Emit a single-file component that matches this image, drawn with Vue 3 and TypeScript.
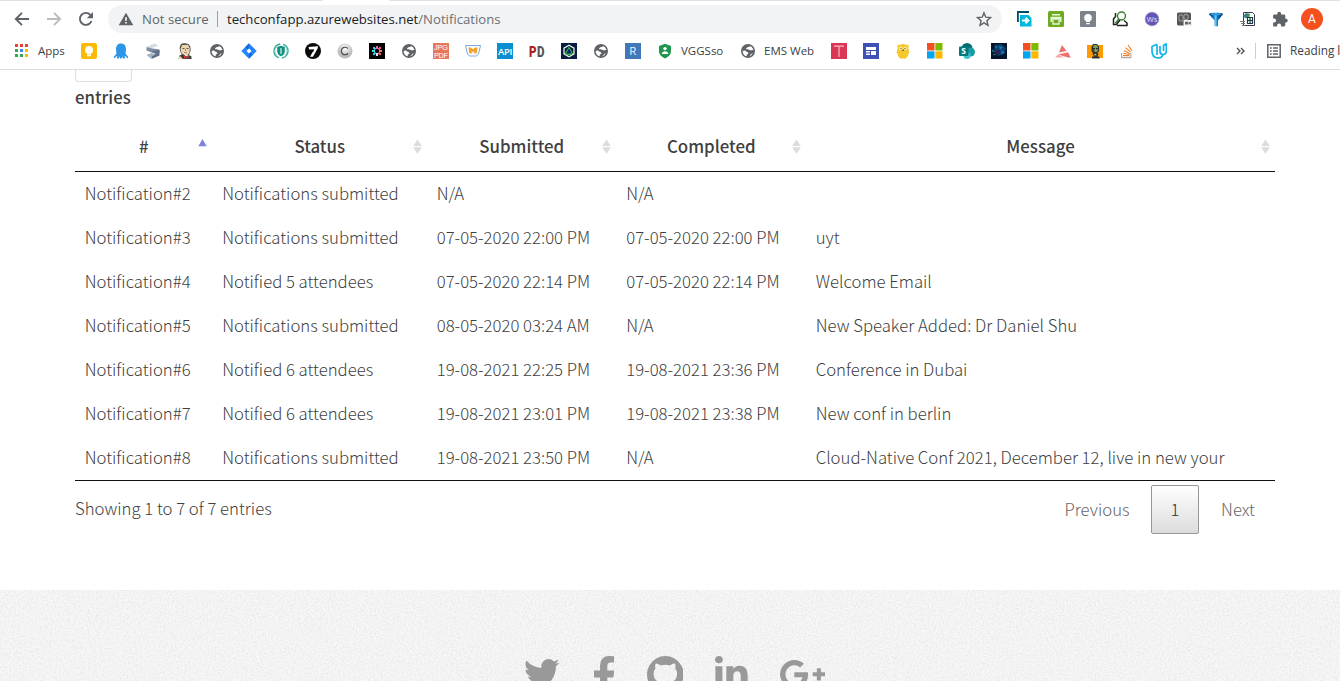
<script setup lang="ts">
interface Bookmark {
  icon: string
  label?: string
  size?: string
}

interface Row {
  id: string
  status: string
  submitted: string
  completed: string
  message: string
}

const globe =
  '<circle cx="8" cy="8" r="7" fill="#5f6368"/><path d="M2.6 8.2C4 7.2 5.600 7.600 6.300 8.600C7.200 9.600 8.600 9 8.400 10.200C8.200 11.200 7 11 6.800 12.200L6.600 13.300C4.200 12.800 2.700 10.700 2.600 8.200ZM6.200 5.300C7.200 3.600 9 4.300 10.300 3.200C11.800 3.800 13 5.300 13.400 7C12 6.600 11.700 7.500 10.400 7.300C9 7 8.600 6 7.500 6.300C6.600 6.500 5.800 6.200 6.200 5.300ZM9.200 13.200C11 12.200 10.400 10.700 12.700 10.200C12 11.800 10.800 12.900 9.200 13.200Z" fill="#fff"/>'

const microsoft =
  '<path fill="#f25022" d="M0 0h7.500v7.500H0z"/><path fill="#7fba00" d="M8.300 0h7.200v7.500H8.300z"/><path fill="#00a4ef" d="M0 8.300h7.500v7.200H0z"/><path fill="#ffb900" d="M8.300 8.300h7.200v7.200H8.300z"/>'

const bookmarks: Bookmark[] = [
  {
    label: 'Apps',
    size: 'apps',
    icon: '<path fill="#ea4335" d="M1 1h3v3H1zM6 1h3v3H6zM11 1h3v3h-3z"/><path fill="#34a853" d="M1 6h3v3H1zM1 11h3v3H1zM6 11h3v3H6z"/><path fill="#4285f4" d="M6 6h3v3H6z"/><path fill="#fbbc05" d="M11 6h3v3h-3zM11 11h3v3h-3z"/>',
  },
  {
    icon: '<rect width="16" height="16" rx="2" fill="#fbba05"/><circle cx="8" cy="7" r="4" fill="#fff"/><path fill="#fff" d="M6 9.500h4v2H6zM6 12h4v1.200H6z"/>',
  },
  {
    icon: '<path fill="#2d95e5" d="M3 6.500C3 2.500 5 .6 8 .6s5 2 5 6c0 2-.6 2.800-.4 4 .3 1.500 2.400 1.800 2.600 4.300l-1.500.1c-.4-1.800-1.400-2-2-1.600l.2 2.200h-2l-.7-2.400-.5 2.400h-1.600l-.5-2.400-.7 2.400H4l.2-2.200c-.8-.4-1.500 0-1.900 1.600L.8 14.900C1 12.300 3.100 12 3.400 10.600 3.600 9.400 3 8.500 3 6.500z"/>',
  },
  {
    icon: '<path fill="#d5dbe2" d="M1.500 4L9.500.5l4 2L6 5.500z"/><path fill="#7e8da1" d="M1.500 4v3.500L10.500 11l4-1.500v-3L6 5.300z"/><path fill="#5d6f88" d="M14.500 7v5.500L6.500 16v-3l5-2.500-5-2z"/><path fill="#a4b0bf" d="M1.500 12l5-2 4 1.500-4 2v2.500z"/>',
  },
  {
    icon: '<path fill="#4b4743" d="M3 8C2 2 4 .3 8 .3S14 3 13.500 8L12 12H5z"/><path fill="#eed5ad" d="M3.500 6l1.500-4 6-.3 1.800 3.800-.4 4.500L9.500 13 6 12 4 9z"/><path fill="#555" d="M5.500 5h2v1h-2zM9.500 5h2v1h-2z"/><path stroke="#a88c72" fill="none" d="M7 9.500h3M8.500 6v2"/><path fill="#394044" d="M1.500 16l1-3.500L6 11l3 2.500 3-1.500 2.500 1.500V16z"/><path fill="#d33833" d="M7 12.500l2 1 2.500-1v3L9 14.700 7 16z"/><path fill="#eed5ad" d="M1 15l2-2 3 3H1z"/>',
  },
  { icon: globe },
  {
    icon: '<path fill="#2684ff" d="M8 .3L15.700 8 8 15.700.3 8z"/><path fill="#0052cc" d="M8 .3L4.300 4 8 7.700zM8 15.700L11.700 12 8 8.300z" opacity=".55"/><path fill="#fff" d="M8 5.500L10.500 8 8 10.500 5.500 8z"/>',
  },
  {
    icon: '<circle cx="8" cy="8" r="7" fill="none" stroke="#35ac9c" stroke-width="1.400" stroke-dasharray="19 2.990" stroke-dashoffset="-13"/><path fill="none" stroke="#8fd3c9" d="M4 3.500a6 6 0 0 0 0 9M12 3.500a6 6 0 0 1 0 9"/><path fill="#138f80" d="M8 2.800l3.800 1.300v4.400c0 2.400-1.700 3.800-3.800 4.700-2.100-.9-3.800-2.300-3.800-4.700V4.100z"/><path stroke="#d7f0eb" d="M8 5v6" stroke-width="1.200"/>',
  },
  {
    icon: '<circle cx="8" cy="8" r="8" fill="#0a0a0a"/><path fill="#fff" d="M3.500 4l9.500-.7-.4 2.200L8 13.800H5l4.200-7.600-5 .3z"/><path stroke="#0a0a0a" d="M4 8.800l5-1"/>',
  },
  {
    icon: '<defs><radialGradient id="silver" cy=".3"><stop stop-color="#fff"/><stop offset="1" stop-color="#bcbcbc"/></radialGradient></defs><circle cx="8" cy="8" r="7.500" fill="url(#silver)"/><path fill="none" stroke="#444" stroke-width="1.100" d="M11 5.600A3.800 3.800 0 1 0 11 10.400"/>',
  },
  {
    icon: '<path d="M0 0h16v16H0z"/><g stroke-width="2"><path stroke="#ff5fa0" d="M8 3v3M11.700 4.300L9.500 6.500"/><path stroke="#ff6a6a" d="M13 8h-3M11.700 11.700L9.500 9.500"/><path stroke="#35dbe8" d="M3 8h3M4.300 11.700l2.200-2.200M4.300 4.300l2.200 2.200"/><path stroke="#e6d8ff" d="M8 13v-3"/></g>',
  },
  { icon: globe },
  {
    icon: '<path fill="#e5775d" d="M0 0h16v16H0z"/><g fill="#fff" font-family="Liberation Sans" font-size="7.300"><text x="1" y="7" textLength="14">JPG</text><text x="1" y="15" textLength="14">PDF</text></g>',
  },
  {
    icon: '<path fill="#fff" stroke="#7aa8da" d="M.5 2.500h15l-2 8.500-2 2h-7l-2-2z"/><path fill="#f4a024" d="M3.500 4.500h2.300L8 6.300l2.200-1.800h2.300l-.8 6H9.200V8.300L8 9.300l-1.200-1v2.200H4.300z"/>',
  },
  {
    icon: '<path fill="#0b8fd3" d="M0 0h16v16H0z"/><text x="1" y="12" fill="#fff" font-family="Open Sans" font-size="9.500" font-weight="600" textLength="14.500">API</text>',
  },
  {
    icon: '<g font-family="Roboto" font-weight="900" font-size="15.500"><text x="0" y="13.500" fill="#a81d20" textLength="7.500" lengthAdjust="spacingAndGlyphs">P</text><text x="8" y="13.500" fill="#555" textLength="7.500" lengthAdjust="spacingAndGlyphs">D</text></g>',
  },
  {
    icon: '<path fill="#081c40" d="M0 0h16v16H0z"/><path fill="none" stroke="#e8f0e6" stroke-width="1.300" d="M8 2.200l5 2.900v5.800l-5 2.900-5-2.900V5.100z"/><path fill="#37b34a" d="M8 3.500l4.200 7-2 1.500H5.800l-2-1.500z"/><path fill="#0a1e66" d="M8 5.500l2.800 5H5.200z"/>',
  },
  { icon: globe },
  {
    icon: '<path fill="#4178ba" d="M0 0h16v16H0z"/><text x="4.300" y="12.300" fill="#e8f2ff" font-family="Open Sans" font-size="11.500">R</text>',
  },
  {
    label: 'VGGSso',
    size: 'sso',
    icon: '<path fill="#1e9650" d="M8 .8l6 2.300v5c0 3.600-2.400 6-6 7.300-3.600-1.300-6-3.700-6-7.300v-5z"/><circle cx="8" cy="5.600" r="1.700" fill="#fff"/><path fill="#fff" d="M4.800 10.900c0-3.600 6.400-3.600 6.400 0z"/>',
  },
  { label: 'EMS Web', size: 'ems', icon: globe },
  {
    icon: '<path fill="#dc3655" d="M0 0h16v16H0z"/><path fill="none" stroke="#f9bcc8" stroke-width="1.200" d="M3 3.200h10M8 3.200V14"/>',
  },
  {
    icon: '<path fill="#3f51b5" d="M0 0h16v16H0z"/><path fill="#fff" d="M3 4h10v3H3zM3 8h4v1.500H3zM3 10.500h4V12H3zM8 8h5v4H8z"/>',
  },
  {
    icon: '<path fill="#f5c92d" d="M2.500 1.500l2 .5C6.500.5 9.500.5 11.500 2l2-.5v3c-.4 1 .3 2 .5 3.500l.5 2-1 .5c-.2 2-1 3.500-2.500 4.500l-1 1-1-.6H7L6 16l-1-1c-1.500-1-2.300-2.500-2.500-4.500l-1-.5.5-2c.2-1.500.9-2.500.5-3.500z"/><g fill="#fbeeb8"><circle cx="5.700" cy="5.300" r="1.600"/><circle cx="10.300" cy="5.300" r="1.600"/></g><path fill="#65511e" d="M5.500 5h1v1h-1zM9.500 5h1v1h-1zM7 6.800h2v1H7z"/>',
  },
  { icon: microsoft },
  {
    icon: '<circle cx="8" cy="5.500" r="5.500" fill="#036c70"/><circle cx="11.500" cy="9" r="4.500" fill="#1a9ba1"/><circle cx="8" cy="12.500" r="3.500" fill="#37c6d0"/><rect y="3.500" width="9.500" height="9.500" rx="1" fill="#03787c"/><text x="2.300" y="11" fill="#fff" font-family="Open Sans" font-weight="700" font-size="8.500">S</text>',
  },
  {
    icon: '<path fill="#07152b" d="M0 0h16v16H0z"/><path fill="#0d3f70" d="M4 2l6-1 5 4-2 6-6 2-4-5z"/><path fill="#1875b5" d="M8 3l4 1-3 3zM11 7l3 3-4 1z"/><path stroke="#0b7f8a" stroke-width="1.300" d="M1 7l2 2M2 12l3-1M4 3l2 2"/><path fill="#33205b" d="M5 7h4v4H5z"/>',
  },
  { icon: microsoft },
  {
    icon: '<path fill="#f0706d" d="M7 2l4.500 6L4 9.500zM3 11.500l10-2.200 2.700 5.200H13z"/><path fill="#f7aaa5" d="M3 11.500l6 3H0z"/>',
  },
  {
    icon: '<path fill="#ff9b00" d="M0 2h16v13H0z"/><path fill="#333" d="M6 1h4l2 2.500V8l-1.500 2 1 1-1 2 2 1v1.500H5V14l2-1-1.500-2L6 10 4.500 8V4z"/><path fill="#77a35b" d="M6.500 2H10l1 2.500v3l-2 2-2-1.500-1-3.500z"/><path fill="#222" d="M6 5h2v1.300H6zM9 5h1.800v1.300H9z"/><path fill="#c8c8aa" d="M7.300 11h2v1.300h-2z"/>',
  },
  {
    icon: '<path fill="none" stroke="#aaa" stroke-width="1.100" d="M2.600 10v4.600h9.300V10"/><g stroke="#f48024" stroke-width="1.100"><path d="M4 12.600h6.500M4.200 10.200l6.300 1.300M4.900 7.600l6 2.800M6.500 4.800l5.100 4.100M9 2l3.800 5.600"/></g>',
  },
  {
    icon: '<path fill="none" stroke="#13b5ea" stroke-width="1.700" stroke-linejoin="round" d="M6 1.300L1 3.600V8c0 4.200 2 6.600 5.500 7 3.300 0 5-1.500 5.700-3.600M6 1.300V12M9 3v5c0 2.500 1.200 3.600 2.800 3.600 2.200 0 3.600-1.600 3.600-4.400V.9L12.500 2.200V8"/>',
  },
]

const extensions: string[] = [
  '<path fill="none" stroke="#004b68" stroke-width="1.800" d="M1.900 11V1H13"/><path fill="#00b8de" d="M4 4h8.500L15.500 7v8.500H4z"/><path fill="none" stroke="#fff" stroke-width="2" d="M6 9.500h6M9.500 6.800l2.800 2.700-2.800 2.700"/>',
  '<rect width="16" height="16" rx="1.500" fill="#6eaa22"/><path fill="#e8f7d4" d="M4 3h8v1.500H4zM2.500 5.700h11V11H12V8.800H4V11H2.500z"/><path fill="none" stroke="#e8f7d4" stroke-width="1.300" d="M5 9v4h6V9"/>',
  '<rect width="16" height="16" rx="1" fill="#7c838a"/><circle cx="8" cy="6.700" r="3.800" fill="#fff"/><path fill="#fff" d="M6 9h4v2H6zM6.200 12h3.600v1.300H6.200z"/>',
  '<path fill="none" stroke="#222" stroke-width="1.500" d="M3.500 2v3.500L1.500 8v5.500h3L8 9M5 14.500h10v-2.500L12 9.500"/><circle cx="9.500" cy="5" r="4" fill="#f7fff4" stroke="#3b793a" stroke-width="1.400"/><path stroke="#3b793a" stroke-width="2" d="M7 8L3.500 12.500"/>',
  '<circle cx="8" cy="8" r="6.800" fill="#6256b2" stroke="#8d85cb" stroke-dasharray="1.500 1"/><text x="2.800" y="10.500" fill="#e6e2ff" font-family="Open Sans" font-size="7.500">Ws</text>',
  '<rect x="1" y="1.500" width="14" height="13" rx="1.500" fill="#555"/><ellipse cx="5" cy="7" rx="2.200" ry="3.300" fill="none" stroke="#999" stroke-width="1.100"/><ellipse cx="10" cy="6" rx="2.200" ry="2.600" fill="none" stroke="#999" stroke-width="1.100"/><rect x="7.500" y="9" width="8.500" height="6" rx="1" fill="#f2f2f2"/><path fill="#666" d="M9 10.800h3.500v2.700H9zM13 11.500l1.800-1v3.300l-1.800-1z"/>',
  '<defs><linearGradient id="funnel"><stop stop-color="#052c50"/><stop offset=".3" stop-color="#0a6bc0"/><stop offset=".48" stop-color="#62ceff"/><stop offset=".62" stop-color="#0a6bc0"/><stop offset="1" stop-color="#042b52"/></linearGradient></defs><path fill="url(#funnel)" d="M1 3.200C1 1.300 15 1.300 15 3.200L10 9.500v5.800H6.500V9.500z"/><ellipse cx="8" cy="3.200" rx="5.500" ry="1.100" fill="#2f9bdc"/>',
  '<path fill="#fff" stroke="#3b3b54" d="M3.500 1.500h9l2 2v11h-11z"/><path fill="#3e75b2" d="M3 5l3-3 4 1-1 4H5z"/><path fill="#33924d" d="M6 3h3v3H6z"/><path fill="#fff" stroke="#173e3c" stroke-width="1.200" d="M7.500 6.500h5v6h-5zM10 6.500v6M7.500 9.500h5"/><path stroke="#777" d="M0 10.500h5M1 12.500h4M2 14.500h3"/>',
  '<path fill="#5f6368" d="M14.300 7.700h-1V4.900c0-.8-.6-1.400-1.400-1.400H9.100V2.700a1.900 1.900 0 0 0-3.800 0v.8H2.500c-.8 0-1.400.6-1.400 1.400v2.600h1a2 2 0 0 1 0 4h-1v2.700c0 .7.6 1.300 1.400 1.300h2.600v-1a2 2 0 0 1 4 0v1h2.800c.8 0 1.400-.6 1.400-1.400v-2.700h1a1.900 1.900 0 0 0 0-3.700z"/>',
]

const columns = ['#', 'Status', 'Submitted', 'Completed', 'Message']

const rows: Row[] = [
  { id: 'Notification#2', status: 'Notifications submitted', submitted: 'N/A', completed: 'N/A', message: '' },
  { id: 'Notification#3', status: 'Notifications submitted', submitted: '07-05-2020 22:00 PM', completed: '07-05-2020 22:00 PM', message: 'uyt' },
  { id: 'Notification#4', status: 'Notified 5 attendees', submitted: '07-05-2020 22:14 PM', completed: '07-05-2020 22:14 PM', message: 'Welcome Email' },
  { id: 'Notification#5', status: 'Notifications submitted', submitted: '08-05-2020 03:24 AM', completed: 'N/A', message: 'New Speaker Added: Dr Daniel Shu' },
  { id: 'Notification#6', status: 'Notified 6 attendees', submitted: '19-08-2021 22:25 PM', completed: '19-08-2021 23:36 PM', message: 'Conference in Dubai' },
  { id: 'Notification#7', status: 'Notified 6 attendees', submitted: '19-08-2021 23:01 PM', completed: '19-08-2021 23:38 PM', message: 'New conf in berlin' },
  { id: 'Notification#8', status: 'Notifications submitted', submitted: '19-08-2021 23:50 PM', completed: 'N/A', message: 'Cloud-Native Conf 2021, December 12, live in new your' },
]
</script>

<template>
  <div class="window">
    <header class="chrome">
      <div class="tab-edge"><span class="edge-left"></span><span class="edge-right"></span></div>
      <div class="toolbar">
        <svg class="nav" viewBox="0 0 16 16"><path d="M15 8H2.500M8 1.800L1.800 8 8 14.200" fill="none" stroke="#5f6368" stroke-width="1.900" /></svg>
        <svg class="nav" viewBox="0 0 16 16"><path d="M1 8h12.500M8 1.800L14.200 8 8 14.200" fill="none" stroke="#babcbe" stroke-width="1.900" /></svg>
        <svg class="nav" viewBox="0 0 16 16"><path d="M13.500 10A6 6 0 1 1 12.300 3.800L14 5.500" fill="none" stroke="#5f6368" stroke-width="1.900" /><path d="M15 1v6.200H8.800z" fill="#5f6368" /></svg>
        <div class="address">
          <svg class="warn" viewBox="0 0 16 14"><path d="M8 .8L15.300 13.300H.7z" fill="#5f6368" /><path d="M7.200 5.200h1.600v3.600H7.200zM7.200 10h1.600v1.600H7.200z" fill="#fff" /></svg>
          <span class="insecure">Not secure</span>
          <span class="divider"></span>
          <span class="url">techconfapp.azurewebsites.net<span class="path">/Notifications</span></span>
          <svg class="star" viewBox="0 0 16 16"><path d="M8 1.900l1.800 4.300 4.700.4-3.600 3.100 1.100 4.600L8 11.800l-4 2.500 1.100-4.600L1.500 6.600l4.700-.4z" fill="none" stroke="#5f6368" stroke-width="1.400" /></svg>
        </div>
        <div class="extensions">
          <svg v-for="(markup, i) in extensions" :key="i" viewBox="0 0 16 16" v-html="markup"></svg>
        </div>
        <span class="avatar">A</span>
      </div>
      <nav class="bookmarks">
        <a v-for="(mark, i) in bookmarks" :key="i" class="bookmark" :class="mark.size">
          <svg viewBox="0 0 16 16" v-html="mark.icon"></svg>
          <span v-if="mark.label" class="label">{{ mark.label }}</span>
        </a>
        <div class="overflow">
          <svg class="more" viewBox="0 0 9 8"><path d="M1 1l3 3-3 3M5 1l3 3-3 3" fill="none" stroke="#4d5156" stroke-width="1.400" /></svg>
          <span class="separator"></span>
          <svg class="list" viewBox="0 0 14 14"><path d="M.8.800h12.400v12.400H.8z" fill="none" stroke="#5f6368" stroke-width="1.500" /><path d="M3 3.300h1.700v1.500H3zM6 3.300h5v1.500H6zM3 6.300h1.700v1.500H3zM6 6.300h5v1.500H6zM3 9.300h1.700v1.500H3zM6 9.300h5v1.500H6z" fill="#5f6368" /></svg>
          <span class="reading label">Reading list</span>
        </div>
      </nav>
    </header>

    <main class="page">
      <div class="length-select"></div>
      <div class="entries">entries</div>
      <table class="grid">
        <colgroup>
          <col class="c-id" /><col class="c-status" /><col class="c-date" /><col class="c-date" /><col />
        </colgroup>
        <thead>
          <tr>
            <th v-for="(name, i) in columns" :key="name">
              {{ name }}
              <svg class="sort" viewBox="0 0 9 16">
                <path v-if="i === 0" d="M4.500 0L8.700 7.200H.3z" fill="#8080e0" />
                <path v-else d="M4.500.500L8.800 7H.2zM.2 8.300h8.600L4.500 15z" fill="#dcdcdc" />
              </svg>
            </th>
          </tr>
        </thead>
        <tbody>
          <tr v-for="row in rows" :key="row.id">
            <td>{{ row.id }}</td>
            <td>{{ row.status }}</td>
            <td>{{ row.submitted }}</td>
            <td>{{ row.completed }}</td>
            <td>{{ row.message }}</td>
          </tr>
        </tbody>
      </table>
      <div class="summary">
        <span class="info">Showing 1 to 7 of 7 entries</span>
        <div class="pager">
          <a class="step previous">Previous</a>
          <a class="current">1</a>
          <a class="step">Next</a>
        </div>
      </div>
    </main>

    <footer class="footer">
      <svg class="grain" width="1340" height="91">
        <filter id="grain" x="0" y="0" width="100%" height="100%">
          <feTurbulence type="fractalNoise" baseFrequency="0.6" numOctaves="2" seed="4" />
          <feColorMatrix values="0 0 0 0 0  0 0 0 0 0  0 0 0 0 0  0.13 0 0 0 -0.048" />
        </filter>
        <rect width="1340" height="91" filter="url(#grain)" />
      </svg>
      <div class="social">
        <svg class="twitter" viewBox="108 256 1576 1280"><path d="M1684 408q-67 98-162 167 1 14 1 42 0 130-38 259.500t-115.500 248.500-184.500 210.500-258 146-323 54.500q-271 0-496-145 35 4 78 4 225 0 401-138-105-2-188-64.500t-114-159.500q33 5 61 5 43 0 85-11-112-23-185.500-111.500t-73.500-205.500v-4q68 38 146 41-66-44-105-115t-39-154q0-88 44-163 121 149 294.500 238.500t371.500 99.500q-8-38-8-74 0-134 94.500-228.500t228.500-94.500q140 0 236 102 109-21 205-78-37 115-142 178 93-10 186-50z" /></svg>
        <svg class="facebook" viewBox="479 0 864 1664"><path d="M1343 12v264h-157q-86 0-116 36t-30 108v189h293l-39 296h-254v759h-306v-759h-255v-296h255v-218q0-186 104-288.500t277-102.500q147 0 228 12z" /></svg>
        <svg class="github" viewBox="128 128 1536 1536"><path d="M896 128q209 0 385.500 103t279.500 279.500 103 385.500q0 251-146.500 451.500t-378.500 277.500q-27 5-40-7t-13-30q0-3 .5-76.500t.5-134.500q0-97-52-142 57-6 102.500-18t94-39 81-66.500 53-105 20.500-150.500q0-119-79-206 37-91-8-204-28-9-81 11t-92 44l-38 24q-93-26-192-26t-192 26q-16-11-42.500-27t-83.500-38.500-85-13.500q-45 113-8 204-79 87-79 206 0 85 20.500 150t52.500 105 80.500 67 94 39 102.500 18q-39 36-49 103-21 10-45 15t-57 5-65.500-21.500-55.500-62.500q-19-32-48.500-52t-49.500-24l-20-3q-21 0-29 4.500t-5 11.500 9 14 13 12l7 5q22 10 43.500 38t31.500 51l10 23q13 38 44 61.500t67 30 69.500 7 55.500-3.500l23-4q0 38 .5 88.500t.5 54.500q0 18-13 30t-40 7q-232-77-378.500-277.500t-146.500-451.500q0-209 103-385.500t279.500-279.500 385.500-103z" /></svg>
        <svg class="linkedin" viewBox="128 148 1536 1468"><path d="M477 625v991h-330v-991h330zm21-306q1 73-50.500 122t-135.500 49h-2q-82 0-132-49t-50-122q0-74 51.500-122.500t134.500-48.500 133 48.500 51 122.500zm1166 729v568h-329v-530q0-105-40.500-164.500t-126.500-59.500q-63 0-105.500 34.500t-63.500 85.500q-11 30-11 81v553h-329q2-399 2-647t-1-296l-1-48h329v144h-2q20-32 41-56t56.500-52 87-43.500 114.500-15.500q171 0 275 113.500t104 332.500z" /></svg>
        <svg class="google" viewBox="0 163 2304 1466"><path d="M1437 913q0 208-87 370.500t-248 254-369 91.500q-149 0-285-58t-234-156-156-234-58-285 58-285 156-234 234-156 285-58q286 0 491 192l-199 191q-117-113-292-113-123 0-227.500 62t-165.500 168.500-61 232.500 61 232.500 165.500 168.500 227.500 62q83 0 152.500-23t114.500-57.500 78.500-78.500 49-83 21.500-74h-416v-252h692q12 63 12 122zm867-122v210h-209v209h-210v-209h-209v-210h209v-209h210v209h209z" /></svg>
      </div>
    </footer>
  </div>
</template>

<style>
html,
body {
  margin: 0;
  overflow: hidden;
  background: #fff;
}
</style>

<style scoped>
.window {
  display: flex;
  flex-direction: column;
  width: 1340px;
  height: 681px;
  overflow: hidden;
  background: #fff;
}

svg {
  display: block;
  flex: none;
}

.chrome {
  box-sizing: border-box;
  height: 70px;
  border-bottom: 1px solid #dadce0;
  font-family: 'Open Sans', sans-serif;
  color: #3c4043;
}

.tab-edge {
  display: flex;
  justify-content: space-between;
  height: 1px;
}

.edge-left {
  width: 323px;
  background: #dee1e6;
}

.edge-right {
  width: 951px;
  background: #dee1e6;
}

.toolbar {
  display: flex;
  align-items: center;
  height: 28px;
  margin-top: 4px;
  padding-left: 14px;
}

.nav {
  width: 16px;
  height: 16px;
  margin-right: 16px;
}

.address {
  display: flex;
  align-items: center;
  box-sizing: border-box;
  width: 894px;
  height: 28px;
  margin-left: -2px;
  padding: 0 10px;
  border-radius: 14px;
  background: #f1f3f4;
  font-size: 13.150px;
  white-space: nowrap;
}

.warn {
  width: 16px;
  height: 14px;
}

.insecure {
  width: 67px;
  margin-left: 8px;
  color: #5f6368;
}

.divider {
  width: 1px;
  height: 16px;
  margin: 0 9px 0 8px;
  background: #9aa0a6;
}

.url {
  color: #202124;
}

.path {
  color: #6c7075;
}

.star {
  width: 16px;
  height: 16px;
  margin-left: auto;
}

.extensions {
  display: flex;
  gap: 16px;
  margin-left: 14px;
}

.extensions svg {
  width: 16px;
  height: 16px;
}

.avatar {
  width: 22px;
  height: 22px;
  margin-left: 13px;
  border-radius: 50%;
  background: #f4511e;
  color: #fff;
  font: 12px/22px Roboto, sans-serif;
  text-align: center;
}

.bookmarks {
  display: flex;
  align-items: center;
  gap: 16px;
  height: 16px;
  margin-top: 10px;
  padding-left: 14px;
  font-size: 11.5px;
  white-space: nowrap;
}

.bookmark {
  display: flex;
  flex: none;
  align-items: center;
  gap: 8px;
  width: 16px;
}

.bookmark svg {
  width: 16px;
  height: 16px;
}

.label {
  padding-bottom: 2px;
}

.bookmark.apps {
  width: 51px;
}

.bookmark.sso {
  width: 67px;
}

.bookmark.ems {
  width: 75px;
}

.overflow {
  display: flex;
  flex: none;
  align-items: center;
  margin-left: 53px;
}

.more {
  width: 9px;
  height: 8px;
}

.separator {
  width: 1px;
  height: 16px;
  margin: 0 11px 0 10px;
  background: #cbcdd1;
}

.list {
  width: 14px;
  height: 14px;
}

.reading {
  margin-left: 9px;
  font-size: 11.800px;
}

.page {
  display: flow-root;
  height: 520px;
  padding: 0 65px 0 75px;
  color: #404040;
  font-family: 'Noto Sans CJK JP', 'Open Sans', sans-serif;
  font-size: 16.730px;
  font-weight: 300;
}

.length-select {
  box-sizing: border-box;
  width: 57px;
  height: 12px;
  border: 1px solid #dedede;
  border-top: 0;
  border-radius: 0 0 4px 4px;
}

.entries {
  height: 32px;
  line-height: 30px;
  font-weight: 500;
}

.grid {
  width: 1200px;
  margin-top: 8px;
  border-bottom: 1px solid #111;
  border-collapse: separate;
  border-spacing: 0;
  table-layout: fixed;
}

.c-id {
  width: 137.500px;
}

.c-status {
  width: 214.500px;
}

.c-date {
  width: 189.500px;
}

.grid th {
  position: relative;
  box-sizing: border-box;
  height: 50px;
  padding: 0 0 2px;
  border-bottom: 1px solid #111;
  font-size: 16.850px;
  font-weight: 500;
  line-height: 47px;
}

.sort {
  position: absolute;
  top: 17px;
  right: 5.500px;
  width: 9px;
  height: 16px;
}

.grid td {
  box-sizing: border-box;
  height: 44px;
  padding: 0 0 2px 9.700px;
  line-height: 42px;
  white-space: nowrap;
}

.summary {
  display: flex;
  justify-content: space-between;
  height: 58px;
}

.info {
  line-height: 54px;
}

.pager {
  display: flex;
  align-items: flex-start;
  padding-top: 4px;
  line-height: 48px;
}

.step {
  padding: 0 20px 0 22px;
  color: #666;
}

.previous {
  padding-right: 21.500px;
}

.current {
  box-sizing: border-box;
  width: 48px;
  height: 49px;
  border: 1px solid #979797;
  border-radius: 2px;
  background: linear-gradient(#fff, #dcdcdc);
  color: #333;
  line-height: 46px;
  text-align: center;
}

.footer {
  position: relative;
  height: 91px;
  overflow: hidden;
  background: #f7f7f7;
}

.grain {
  position: absolute;
  inset: 0;
}

.social {
  position: relative;
  display: flex;
  align-items: flex-start;
  padding: 66px 0 0 524px;
  fill: #999;
}

.twitter {
  width: 35.500px;
  height: 29px;
  margin-top: 3px;
}

.facebook {
  width: 20.500px;
  height: 39.500px;
  margin-left: 34px;
}

.github {
  width: 36.700px;
  height: 36.700px;
  margin-left: 32.700px;
}

.linkedin {
  width: 32.700px;
  height: 31.300px;
  margin-left: 31.700px;
}

.google {
  width: 45px;
  height: 28.600px;
  margin: 4px 0 0 32px;
}
</style>
